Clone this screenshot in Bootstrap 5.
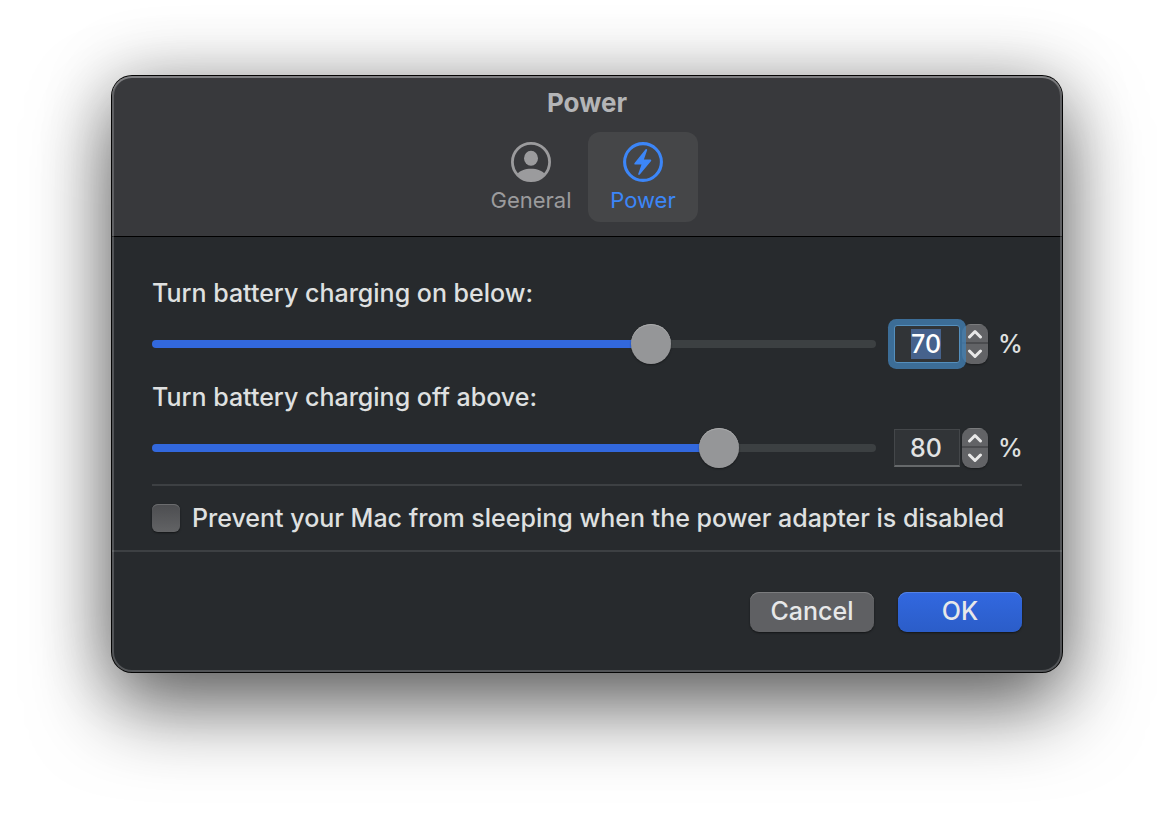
<!DOCTYPE html>
<html lang="en">
<head>
<meta charset="utf-8">
<meta name="viewport" content="width=device-width, initial-scale=1">
<title>Power</title>
<link href="https://cdn.jsdelivr.net/npm/bootstrap@5.3.0/dist/css/bootstrap.min.css" rel="stylesheet">
<style>
  body { background: #fff; color: #dfe0e0; font-family: Inter, "Liberation Sans", sans-serif; font-size: 25px; font-weight: 500; line-height: 30px; }
  .desk { padding: 76px 112px 148px; }
  .prefs { position: relative; background: #272a2d; border-radius: 20px;
    box-shadow: 0 0 0 1px #050505, 0 36px 80px rgba(0,0,0,.56), 0 0 70px rgba(0,0,0,.24); }
  /* light rim drawn over header and body alike */
  .prefs::after { content: ""; position: absolute; inset: 0; border-radius: inherit; pointer-events: none;
    box-shadow: inset 0 0 0 2px rgba(255,255,255,.2), inset 0 2px 0 rgba(255,255,255,.2); }
  .prefs-head { background: #38393c; border-bottom: 1px solid #000; border-radius: 20px 20px 0 0; padding: 12px 0 14px; }
  .prefs-title { font-size: 26px; line-height: 30px; font-weight: 700; color: #b4b5b7; margin-bottom: 14px; }
  .tabs { gap: 2px; }
  .tab-btn { width: 110px; height: 90px; border: 0; border-radius: 12px; background: transparent; color: #9b9b9d; font-size: 22px; font-weight: 400; line-height: 28px; padding: 10px 0 8px; gap: 4px; }
  .tab-btn.active { background: #454648; color: #3c86f8; }
  .prefs-body { padding: 41px 40px 18px; }
  .range-line { gap: 18px; margin: 16px 0 18px; }
  .range-line.last { margin-bottom: 16px; }
  .level { -webkit-appearance: none; appearance: none; flex: 1 1 0; min-width: 0; height: 40px; margin: 0; background: transparent; }
  .level::-webkit-slider-runnable-track { height: 8px; border-radius: 4px;
    background: linear-gradient(#3268dd, #3268dd) 0 0 / var(--fill) 100% no-repeat #3c4042; }
  .level::-webkit-slider-thumb { -webkit-appearance: none; width: 40px; height: 40px; margin-top: -16px; border-radius: 50%;
    background: #959698; box-shadow: inset 0 1px 0 #a9aaab, 0 1px 2px rgba(0,0,0,.4); }
  .amount { width: 66px; height: 38px; padding: 0 2px 0 0; text-align: center; color: #e2e3e3; background: #313437; line-height: 32px; font-weight: 500;
    border: 1px solid #44474a; border-bottom: 2px solid #66696b; border-radius: 0; position: relative; z-index: 1; outline: 0; }
  .amount:focus { color: #fff; border: 1px solid #548fbd; border-radius: 3px; box-shadow: 0 0 0 6px rgba(66,126,178,.8); }
  .amount::selection { background: #46628c; color: #fff; }
  .stepper { width: 26px; height: 40px; margin: 0 10px 0 2px; border-radius: 9px; overflow: hidden; background: #626366; box-shadow: 0 1px 2px rgba(0,0,0,.4); }
  .stepper button { border: 0; padding: 0; height: 20px; background: transparent; color: #e8e8e8; display: flex; align-items: center; justify-content: center; }
  .stepper button:first-child { border-bottom: 2px solid #4b4c4f; border-top: 1px solid #7a7b7d; }
  .unit { width: 24px; }
  .rule { height: 2px; background: #3d4043; margin-bottom: 18px; }
  .tick { -webkit-appearance: none; appearance: none; width: 28px; height: 28px; margin: 0; border-radius: 6px; background: linear-gradient(#4c4d50, #626365);
    box-shadow: inset 0 1px 0 #6b6c6e, 0 1px 2px rgba(0,0,0,.5); }
  .tick:checked { background: #3268dd; }
  .tick-line { gap: 12px; line-height: 28px; }
  .prefs-foot { border-top: 2px solid #3d4043; padding: 40px; gap: 24px; }
  .act { width: 124px; height: 40px; border: 0; border-radius: 9px; padding: 0 0 2px; line-height: 38px; font-weight: 500; color: #e7e8e9; background: #5f6063; box-shadow: inset 0 1px 0 #7b7c7e, 0 1px 2px rgba(0,0,0,.5); }
  .act-main { background: linear-gradient(#3268e0, #2b5dc8); box-shadow: inset 0 1px 0 #5482e6, 0 1px 2px rgba(0,0,0,.5); }
</style>
</head>
<body>
<main class="desk">
  <form class="prefs" onsubmit="return false">
    <header class="prefs-head text-center">
      <h1 class="prefs-title">Power</h1>
      <nav class="tabs d-flex justify-content-center">
        <button type="button" class="tab-btn d-flex flex-column align-items-center">
          <svg width="40" height="40" viewBox="0 0 40 40" aria-hidden="true">
            <defs><clipPath id="disc"><circle cx="20" cy="20" r="19"/></clipPath></defs>
            <circle cx="20" cy="20" r="18.6" fill="none" stroke="currentColor" stroke-width="2.8"/>
            <ellipse cx="20" cy="16.3" rx="7" ry="7.5" fill="currentColor"/>
            <path d="M5 33C9 28.5 14 26.8 20 26.8S31 28.5 35 33L30 40H10Z" fill="currentColor" clip-path="url(#disc)"/>
          </svg>
          <span>General</span>
        </button>
        <button type="button" class="tab-btn active d-flex flex-column align-items-center">
          <svg width="40" height="40" viewBox="0 0 40 40" aria-hidden="true">
            <circle cx="20" cy="20" r="18.4" fill="none" stroke="currentColor" stroke-width="3.1"/>
            <path d="M22.6 7.2 11.4 21.3Q10.9 22.5 12 22.5H18.5L15.2 32Q15.4 33.6 16.8 32.6L28.1 18.9Q28.7 17.7 27.5 17.6H20.9L24.2 8.1Q24 6.5 22.6 7.2Z" fill="currentColor"/>
          </svg>
          <span>Power</span>
        </button>
      </nav>
    </header>

    <section class="prefs-body">
      <label class="d-block" for="on-level">Turn battery charging on below:</label>
      <div class="range-line d-flex align-items-center">
        <input class="level" id="on-level" type="range" min="0" max="100" value="70" style="--fill:calc(20px + (100% - 40px) * .7)">
        <div class="d-flex align-items-center">
          <input class="amount" id="on-amount" type="text" inputmode="numeric" value="70" aria-label="Charge on below, percent">
          <div class="stepper d-flex flex-column">
            <button type="button" aria-label="Increase"><svg width="16" height="10" viewBox="0 0 16 10" fill="none" stroke="currentColor" stroke-width="3" stroke-linecap="round" stroke-linejoin="round"><path d="M2.5 8 8 2.5 13.5 8"/></svg></button>
            <button type="button" aria-label="Decrease"><svg width="16" height="10" viewBox="0 0 16 10" fill="none" stroke="currentColor" stroke-width="3" stroke-linecap="round" stroke-linejoin="round"><path d="M2.5 2 8 7.5 13.5 2"/></svg></button>
          </div>
          <span class="unit">%</span>
        </div>
      </div>
      <label class="d-block" for="off-level">Turn battery charging off above:</label>
      <div class="range-line last d-flex align-items-center">
        <input class="level" id="off-level" type="range" min="0" max="100" value="80" style="--fill:calc(20px + (100% - 40px) * .8)">
        <div class="d-flex align-items-center">
          <input class="amount" id="off-amount" type="text" inputmode="numeric" value="80" aria-label="Charge off above, percent">
          <div class="stepper d-flex flex-column">
            <button type="button" aria-label="Increase"><svg width="16" height="10" viewBox="0 0 16 10" fill="none" stroke="currentColor" stroke-width="3" stroke-linecap="round" stroke-linejoin="round"><path d="M2.5 8 8 2.5 13.5 8"/></svg></button>
            <button type="button" aria-label="Decrease"><svg width="16" height="10" viewBox="0 0 16 10" fill="none" stroke="currentColor" stroke-width="3" stroke-linecap="round" stroke-linejoin="round"><path d="M2.5 2 8 7.5 13.5 2"/></svg></button>
          </div>
          <span class="unit">%</span>
        </div>
      </div>
      <div class="rule"></div>
      <div class="tick-line d-flex align-items-center">
        <input class="tick flex-shrink-0" type="checkbox" id="awake">
        <label for="awake">Prevent your Mac from sleeping when the power adapter is disabled</label>
      </div>
    </section>

    <footer class="prefs-foot d-flex justify-content-end">
      <button type="button" class="act">Cancel</button>
      <button type="submit" class="act act-main">OK</button>
    </footer>
  </form>
</main>
<script src="https://cdn.jsdelivr.net/npm/bootstrap@5.3.0/dist/js/bootstrap.bundle.min.js"></script>
<script>
  const first = document.getElementById('on-amount');
  first.focus();
  first.select();
</script>
</body>
</html>
